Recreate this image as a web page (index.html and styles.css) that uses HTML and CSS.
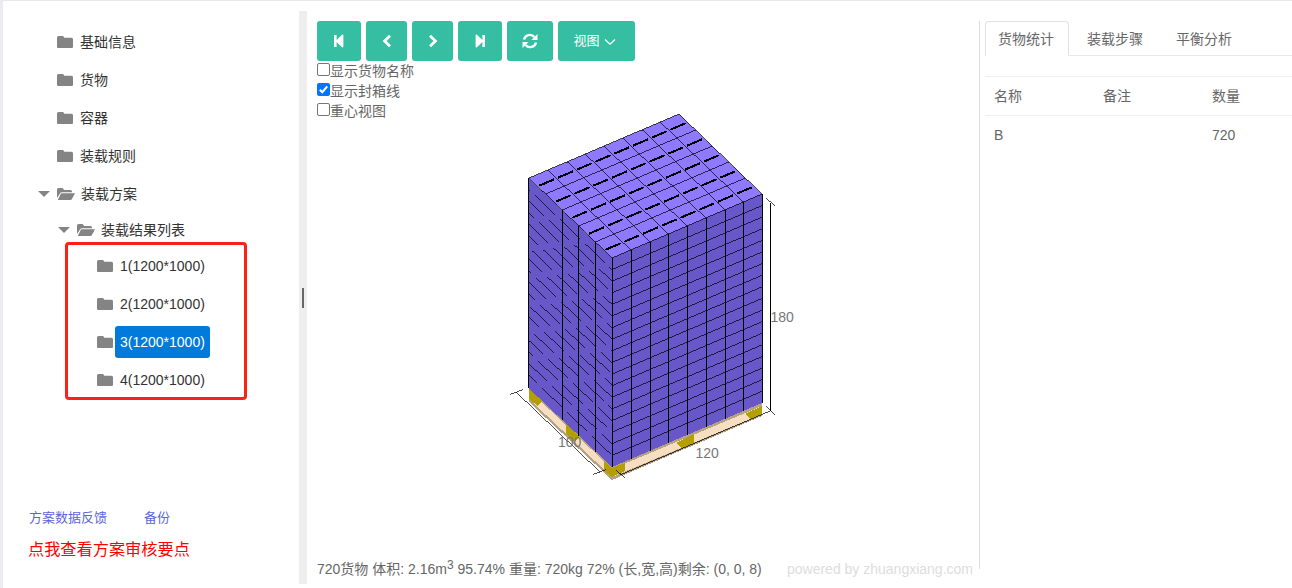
FILE: index.html
```
<!DOCTYPE html>
<html lang="zh-CN">
<head>
<meta charset="utf-8">
<title>装载方案</title>
<link rel="stylesheet" href="styles.css">
</head>
<body>
<svg class="defs" width="0" height="0">
  <symbol id="folder" viewBox="0 0 16 13"><path d="M0 1.5Q0 0 1.5 0H5.5Q6.5 0 7 1.2L7.3 1.7H14.5Q16 1.7 16 3.2V11Q16 12 15 12H1Q0 12 0 11Z"/></symbol>
  <symbol id="open" viewBox="0 0 18 13"><path d="M0 10V1.5Q0 0 1.5 0H5.5L7.2 2H13.5Q15 2 15 3.5V4.2H5Q3.8 4.2 3 5.4Z"/><path d="M4.7 5.3H18L14.8 11.2Q14.3 12 13.4 12H.8L3.7 6Q4.1 5.3 4.7 5.3Z"/></symbol>
</svg>
<div class="app">
  <aside class="side">
    <ul class="tree">
      <li class="row"><svg class="folder"><use href="#folder"/></svg><span class="label">基础信息</span></li>
      <li class="row"><svg class="folder"><use href="#folder"/></svg><span class="label">货物</span></li>
      <li class="row"><svg class="folder"><use href="#folder"/></svg><span class="label">容器</span></li>
      <li class="row"><svg class="folder"><use href="#folder"/></svg><span class="label">装载规则</span></li>
      <li class="row parent"><i class="caret"></i><svg class="open"><use href="#open"/></svg><span class="label">装载方案</span></li>
      <li class="row parent second"><i class="caret"></i><svg class="open"><use href="#open"/></svg><span class="label">装载结果列表</span></li>
      <li class="row leaf"><svg class="folder"><use href="#folder"/></svg><span class="label">1(1200*1000)</span></li>
      <li class="row leaf"><svg class="folder"><use href="#folder"/></svg><span class="label">2(1200*1000)</span></li>
      <li class="row leaf"><svg class="folder"><use href="#folder"/></svg><span class="label selected">3(1200*1000)</span></li>
      <li class="row leaf"><svg class="folder"><use href="#folder"/></svg><span class="label">4(1200*1000)</span></li>
    </ul>
    <div class="highlight"></div>
    <div class="foot">
      <div class="links"><a>方案数据反馈</a><a>备份</a></div>
      <a class="review">点我查看方案审核要点</a>
    </div>
  </aside>
  <div class="splitter"><i class="grip"></i></div>
  <main class="stage">
    <div class="toolbar">
      <button class="btn b44"><svg width="12" height="14" viewBox="0 0 12 14"><path d="M1 1h2.6v5L9 .8Q10.4.2 10.4 1.4v11.2Q10.4 13.8 9 13.2L3.6 8v5H1Z"/></svg></button>
      <button class="btn b41"><svg width="12" height="14" viewBox="0 0 12 14"><path class="chev" d="M9 1.8 3.6 7 9 12.2"/></svg></button>
      <button class="btn b41"><svg width="12" height="14" viewBox="0 0 12 14"><path class="chev" d="M3 1.8 8.4 7 3 12.2"/></svg></button>
      <button class="btn b44"><svg width="12" height="14" viewBox="0 0 12 14"><path d="M11 1H8.400v5L3 .8Q1.600.2 1.600 1.400v11.200Q1.600 13.800 3 13.200L8.400 8v5H11Z"/></svg></button>
      <button class="btn b46"><svg width="16" height="16" viewBox="0 0 16 16"><path class="spin" d="M2 6.600A6 6 0 0 1 12.400 4M14 9.400A6 6 0 0 1 3.600 12"/><path d="M15.500 1v6H9.500ZM.5 15V9h6Z"/></svg></button>
      <button class="btn b77">视图<svg width="12" height="8" viewBox="0 0 12 8"><path class="thin" d="M1 1.500 6 6.200 11 1.500"/></svg></button>
    </div>
    <div class="options">
      <label class="opt"><i class="check"></i>显示货物名称</label>
      <label class="opt"><i class="check on"><svg width="13" height="13" viewBox="0 0 13 13"><path d="M2.800 6.700 5.300 9.200 10.200 3.300"/></svg></i>显示封箱线</label>
      <label class="opt"><i class="check"></i>重心视图</label>
    </div>
    <svg class="scene" id="scene" viewBox="500 100 310 390" width="310" height="390">
      <g shape-rendering="crispEdges">
        <path class="rim" d="M529 386V402L612 480 762 416V402L612 466Z"/>
        <path class="deck" d="M529 390V399L612 477 762 414V406L612 469Z"/>
        <path class="block" d="M529 388 542 401 538 406 529 399ZM566 424 579 437 574 442 566 434ZM604 461V471L612 477 625 471V463L612 468ZM676 443 694 434V443L682 449ZM745 414 762 406V414L750 419Z"/>
        <path class="face" d="M528.500 178 612 258 762 194V403L612 467 528.500 388Z"/>
        <path class="top" d="M529 178 679 114 762 194 612 258Z"/>
        <g id="grid"></g>
        <path class="slant" d="M516 392 600 472M510 394.500 523 389.500M593 474.500 606 469.500M620 475 770 411M616 470 625 478M766 406 775 415M766 198 775 206"/>
        <path class="line" d="M770.500 203V411"/>
      </g>
      <text class="dim" x="558" y="447">100</text>
      <text class="dim" x="695.500" y="458">120</text>
      <text class="dim" x="770.500" y="322">180</text>
    </svg>
    <div class="status"><span>720货物 体积: 2.16m<sup>3</sup> 95.74% 重量: 720kg 72% (长,宽,高)剩余: (0, 0, 8)</span><span class="power">powered by zhuangxiang.com</span></div>
  </main>
  <section class="panel">
    <nav class="tabs"><a class="tab active">货物统计</a><a class="tab">装载步骤</a><a class="tab">平衡分析</a></nav>
    <div class="table">
      <div class="tr"><span>名称</span><span>备注</span><span>数量</span></div>
      <div class="tr body"><span>B</span><span></span><span>720</span></div>
    </div>
  </section>
</div>
<script src="scene.js"></script>
</body>
</html>
```
FILE: styles.css
```
* { box-sizing: border-box; }
body { margin: 0; font: 14px/20px "Liberation Sans", "Noto Sans CJK SC", sans-serif; color: #666; background: #fff; }
.defs { position: absolute; }
.app { display: flex; height: 588px; border-top: 1px solid #e8e8ea; border-left: 3px solid #ebebf0; overflow: hidden; }
.side { position: relative; width: 296px; display: flex; flex-direction: column; justify-content: space-between; padding: 22px 0 27px; }
.tree { list-style: none; margin: 0; padding: 0; color: #333; }
.row { display: flex; align-items: center; height: 38px; padding-left: 54px; }
.parent { padding-left: 35px; }
.second { height: 34px; padding-left: 55px; }
.leaf { padding-left: 94px; }
.folder { width: 16px; height: 13px; fill: #848484; margin-right: 2px; }
.open { width: 18px; height: 13px; fill: #848484; margin-right: 1px; }
.caret { border: 6px solid transparent; border-top-color: #848484; border-bottom: 0; margin-right: 7px; }
.label { height: 32px; padding: 0 5px; line-height: 32px; border-radius: 3px; white-space: nowrap; }
.selected { color: #fff; background: #007bdb; }
.highlight { position: absolute; left: 62px; top: 241px; width: 182px; height: 158px; border: 3px solid #fb2114; border-radius: 4px; }
.foot { padding-left: 25px; display: flex; flex-direction: column; gap: 9px; }
.links { display: flex; gap: 37px; color: #5d65db; font-size: 13px; line-height: 20px; padding-left: 1px; }
.review { color: #f00; font-size: 16.200px; line-height: 24px; }
.splitter { width: 8px; height: 573px; margin-top: 10px; background: #eee; display: flex; align-items: center; justify-content: center; }
.grip { width: 2px; height: 20px; background: #666; }
.stage { position: relative; width: 672px; padding: 20px 0 9px 10px; display: flex; flex-direction: column; }
.toolbar { display: flex; gap: 5px; height: 40px; }
.btn { display: flex; align-items: center; justify-content: center; height: 40px; padding: 0; border: 0; border-radius: 3px; background: #35bea2; color: #fff; fill: #fff; font: 13px "Liberation Sans", "Noto Sans CJK SC", sans-serif; }
.b44 { width: 44px; }
.b41 { width: 41px; }
.b46 { width: 46px; }
.b77 { width: 77px; gap: 4px; padding: 0 4px 4px 0; }
.b77 svg { margin-top: 6px; }
.chev { fill: none; stroke: #fff; stroke-width: 2.8; }
.spin { fill: none; stroke: #fff; stroke-width: 2.400; }
.thin { fill: none; stroke: #fff; stroke-width: 1.200; }
.options { display: flex; flex-direction: column; }
.opt { display: flex; height: 20px; line-height: 20px; }
.check { width: 13px; height: 13px; margin-top: 2px; border: 1px solid #767676; border-radius: 2px; }
.on { border: 0; background: #0075ff; }
.on svg { display: block; fill: none; stroke: #fff; stroke-width: 2; }
.scene { position: absolute; left: 193px; top: 99px; }
.rim { fill: #b5a184; }
.deck { fill: #f6dfc1; }
.block { fill: #b3a000; }
.face { fill: #6857c8; }
.top { fill: #8f7aff; }
.line { fill: none; stroke: #000; stroke-width: 1; }
.slant { fill: none; stroke: #000; stroke-width: .7; }
.seal { fill: none; stroke: #000; stroke-width: 2; }
.layer { fill: none; stroke: #000; stroke-width: .7; stroke-dasharray: 27.600 6.900; }
.dim { font-size: 14px; fill: #777; }
.status { margin-top: auto; display: flex; justify-content: space-between; padding-right: 6px; white-space: nowrap; line-height: 20px; }
.status sup { font-size: 12px; line-height: 0; vertical-align: 5px; }
.power { color: #ddd; }
.panel { width: 313px; height: 548px; margin-top: 20px; border-left: 1px solid #ddd; padding-left: 5px; }
.tabs { display: flex; height: 35px; border-bottom: 1px solid #e8e8ec; }
.tab { height: 35px; line-height: 34px; padding: 0 14px 0 12px; border: 1px solid transparent; margin-right: 5px; }
.active { border-color: #dee2e6; border-bottom-color: #fff; border-radius: 4px 4px 0 0; }
.table { margin-top: 20px; border-top: 1px solid #f0f0f0; }
.tr { display: grid; grid-template-columns: 109px 109px 1fr; height: 39px; line-height: 38px; padding-left: 9px; border-bottom: 1px solid #f0f0f0; }
.body { border-bottom: 0; }
```
FILE: scene.js
```
// Draws the carton edges: 8 x 5 cartons per layer, 18 layers.
const grid = document.getElementById('grid');
function add(cls, x1, y1, x2, y2, offset) {
  const p = document.createElementNS('http://www.w3.org/2000/svg', 'path');
  p.setAttribute('class', cls);
  p.setAttribute('d', `M${x1} ${y1}L${x2} ${y2}`);
  if (offset !== undefined) p.setAttribute('stroke-dashoffset', offset);
  grid.appendChild(p);
}
for (let i = 0; i <= 8; i++) {
  const x = i * 18.75, y = -i * 8;
  add('slant', 529 + x, 178 + y, 612 + x, 258 + y);
  const vx = Math.round(612 + x) + 0.5;
  add('line', vx, 258 + y, vx, 467 + y);
}
for (let j = 0; j <= 5; j++) {
  const x = j * 16.6, y = j * 16;
  add('slant', 529 + x, 178 + y, 679 + x, 114 + y);
  if (j !== 1 && j < 5) {
    const vx = Math.floor(529 + x) + (j ? 0.5 : -0.5);
    add('line', vx, 178 + y, vx, 388 + y);
  }
  if (j < 5) {
    for (let i = 0; i < 8; i++) {
      const cx = 529 + (i + 0.5) * 18.75 + (j + 0.5) * 16.6;
      const cy = 178.500 - (i + 0.5) * 8 + (j + 0.5) * 16;
      add('seal', cx - 7.500, cy + 3.200, cx + 7.500, cy - 3.200);
    }
  }
}
for (let k = 1; k < 18; k++) {
  const y = k * 11.61;
  add('slant', 612, 258 + y, 762, 194 + y);
  const shift = ((-6 + (k - 1) * 10.5) % 25 + 25) % 25;
  add('layer', 529, 178 + y, 612, 258 + y, shift * 1.38);
}
```
